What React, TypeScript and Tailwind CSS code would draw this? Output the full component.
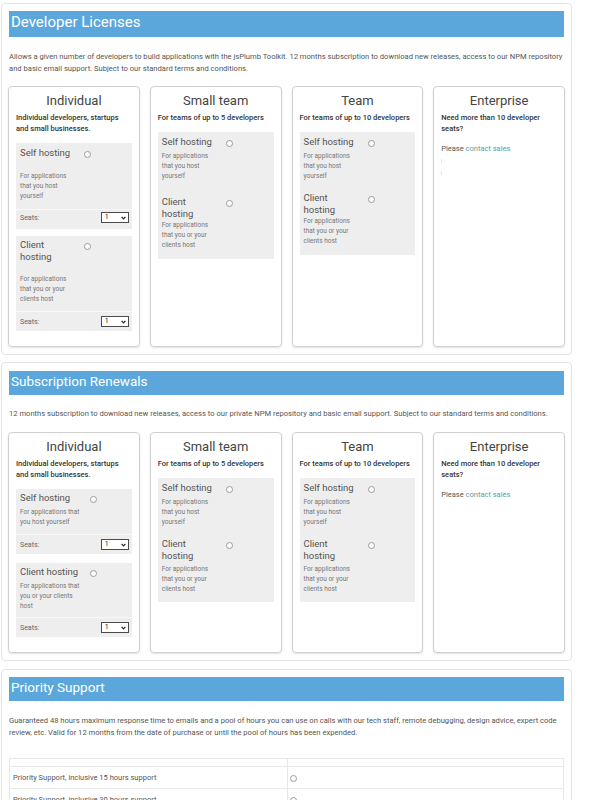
import React from "react";

type OptionProps = {
  title: string;
  desc: string;
  col: string;
  radioMl: string;
  descMt: string;
};

function Radio({ className }: { className: string }) {
  return (
    <span
      className={
        "block h-[7px] w-[7px] shrink-0 rounded-full border border-[#9a9a9a] bg-white " +
        className
      }
    />
  );
}

function Seats({ pad }: { pad: string }) {
  return (
    <div
      className={
        "flex items-center justify-between border-t border-[#f9f9f9] pl-[4px] pr-[3px] " + pad
      }
    >
      <span className="text-[7px] leading-[10px] text-[#666]">Seats:</span>
      <div className="flex h-[11px] w-[28px] items-center justify-between border border-[#4a4a4a] bg-white pl-[3px] pr-[2px]">
        <span className="text-[7px] leading-none text-[#222]">1</span>
        <svg width="5" height="4" viewBox="0 0 5 4">
          <path d="M0.6 0.8 L2.5 2.9 L4.4 0.8" fill="none" stroke="#222" strokeWidth="1.2" />
        </svg>
      </div>
    </div>
  );
}

function Option({ title, desc, col, radioMl, descMt }: OptionProps) {
  return (
    <div className="flex items-start">
      <div className={col}>
        <div className="text-[9.5px] leading-[12px] text-[#555]">{title}</div>
        <div className={descMt + " text-[6.5px] leading-[10px] text-[#777]"}>{desc}</div>
      </div>
      <Radio className={radioMl + " mt-[4px]"} />
    </div>
  );
}

function Card({
  title,
  subtitle,
  children,
}: {
  title: string;
  subtitle: string;
  children: React.ReactNode;
}) {
  return (
    <div className="rounded-[4px] border border-[#d0d0d0] px-[7px] pt-[6px] pb-[15px] shadow-[0_1px_2px_rgba(0,0,0,0.12)]">
      <div className="text-center text-[13px] leading-[16px] text-[#444]">{title}</div>
      <div className="mt-[3px] text-[7.5px] font-medium leading-[11px] text-[#333]">{subtitle}</div>
      {children}
    </div>
  );
}

function Heading({ text, cls }: { text: string; cls: string }) {
  return <div className={"mx-[1px] bg-[#5ba7dc] pl-[2px] leading-[20px] text-white " + cls}>{text}</div>;
}

function Section({ children, className }: { children: React.ReactNode; className: string }) {
  return (
    <div
      className={
        "ml-[1px] w-[571px] rounded-[4px] border border-[#e4e4e4] px-[6px] pb-[7px] " + className
      }
    >
      {children}
    </div>
  );
}

function TeamCard({
  title,
  subtitle,
  gap,
  hostMt,
  pb,
}: {
  title: string;
  subtitle: string;
  gap: string;
  hostMt: string;
  pb: string;
}) {
  return (
    <Card title={title} subtitle={subtitle}>
      <div className={"mt-[9px] bg-[#eeeeee] px-[4px] pt-[4px] " + pb}>
        <Option
          title="Self hosting"
          desc="For applications that you host yourself"
          col="w-[56px]"
          radioMl="ml-[8px]"
          descMt="mt-[3px]"
        />
        <div className={gap}>
          <Option
            title="Client hosting"
            desc="For applications that you or your clients host"
            col="w-[56px]"
            radioMl="ml-[8px]"
            descMt={hostMt}
          />
        </div>
      </div>
    </Card>
  );
}

function EnterpriseCard({ marks }: { marks: boolean }) {
  return (
    <Card title="Enterprise" subtitle="Need more than 10 developer seats?">
      <div className="mt-[9px] text-[7.5px] leading-[11px] text-[#555]">
        Please <span className="text-[#5a9e9d]">contact sales</span>
      </div>
      {marks && (
        <div className="flex flex-col">
          <span className="mt-[5px] block h-[4px] w-px bg-[#e8e8e8]" />
          <span className="mt-[8px] block h-[4px] w-px bg-[#e8e8e8]" />
        </div>
      )}
    </Card>
  );
}

const supportRows = [
  "Priority Support, inclusive 15 hours support",
  "Priority Support, inclusive 30 hours support",
  "Priority Support, inclusive 60 hours support",
];

export default function App() {
  return (
    <div className="h-[800px] overflow-hidden bg-white pt-[3px] font-[Roboto,Arial,sans-serif]">
      {/* Developer licenses */}
      <Section className="pt-[7px]">
        <Heading text="Developer Licenses" cls="h-[26px] pt-[1px] text-[15px]" />
        <p className="mx-[1px] mt-[14px] text-[7.6px] leading-[12px] text-[#555]">
          Allows a given number of developers to build applications with the jsPlumb Toolkit. 12
          months subscription to download new releases, access to our NPM repository and basic
          email support. Subject to our standard terms and conditions.
        </p>
        <div className="mt-[11px] grid grid-cols-4 gap-[10px]">
          <Card title="Individual" subtitle="Individual developers, startups and small businesses.">
            <div className="mt-[9px] bg-[#eeeeee]">
              <div className="px-[4px] pt-[4px] pb-[8px]">
                <Option
                  title="Self hosting"
                  desc="For applications that you host yourself"
                  col="w-[56px]"
                  radioMl="ml-[8px]"
                  descMt="mt-[12px]"
                />
              </div>
              <Seats pad="pt-[2px] pb-[6px]" />
            </div>
            <div className="mt-[7px] bg-[#eeeeee]">
              <div className="px-[4px] pt-[3px] pb-[7px]">
                <Option
                  title="Client hosting"
                  desc="For applications that you or your clients host"
                  col="w-[56px]"
                  radioMl="ml-[8px]"
                  descMt="mt-[11px]"
                />
              </div>
              <Seats pad="pt-[4px] pb-[4px]" />
            </div>
          </Card>
          <TeamCard
            title="Small team"
            subtitle="For teams of up to 5 developers"
            gap="mt-[15px]"
            hostMt="mt-0"
            pb="pb-[9px]"
          />
          <TeamCard
            title="Team"
            subtitle="For teams of up to 10 developers"
            gap="mt-[11px]"
            hostMt="mt-0"
            pb="pb-[9px]"
          />
          <EnterpriseCard marks />
        </div>
      </Section>

      {/* Subscription renewals */}
      <Section className="mt-[7px] pt-[8px]">
        <Heading text="Subscription Renewals" cls="h-[24px] text-[13.5px]" />
        <p className="mx-[1px] mt-[13px] text-[7.6px] leading-[12px] text-[#555]">
          12 months subscription to download new releases, access to our private NPM repository and
          basic email support. Subject to our standard terms and conditions.
        </p>
        <div className="mt-[12px] grid grid-cols-4 gap-[10px]">
          <Card title="Individual" subtitle="Individual developers, startups and small businesses.">
            <div className="mt-[9px] bg-[#eeeeee]">
              <div className="px-[4px] pt-[3px] pb-[7px]">
                <Option
                  title="Self hosting"
                  desc="For applications that you host yourself"
                  col="w-[64px]"
                  radioMl="ml-[6px]"
                  descMt="mt-[3px]"
                />
              </div>
              <Seats pad="pt-[4px] pb-[4px]" />
            </div>
            <div className="mt-[9px] bg-[#eeeeee]">
              <div className="px-[4px] pt-[3px] pb-[6px]">
                <Option
                  title="Client hosting"
                  desc="For applications that you or your clients host"
                  col="w-[64px]"
                  radioMl="ml-[6px]"
                  descMt="mt-[3px]"
                />
              </div>
              <Seats pad="pt-[4px] pb-[4px]" />
            </div>
          </Card>
          <TeamCard
            title="Small team"
            subtitle="For teams of up to 5 developers"
            gap="mt-[11px]"
            hostMt="mt-[2px]"
            pb="pb-[8px]"
          />
          <TeamCard
            title="Team"
            subtitle="For teams of up to 10 developers"
            gap="mt-[11px]"
            hostMt="mt-[2px]"
            pb="pb-[8px]"
          />
          <EnterpriseCard marks={false} />
        </div>
      </Section>

      {/* Priority support */}
      <Section className="mt-[8px] pt-[7px]">
        <Heading text="Priority Support" cls="h-[24px] text-[13.5px]" />
        <p className="mx-[1px] mt-[14px] text-[7.6px] leading-[11.5px] text-[#555]">
          Guaranteed 48 hours maximum response time to emails and a pool of hours you can use on
          calls with our tech staff, remote debugging, design advice, expert code review, etc. Valid
          for 12 months from the date of purchase or until the pool of hours has been expended.
        </p>
        <div className="mx-[1px] mt-[20px] border border-[#e8e8e8]">
          <div className="grid h-[8px] grid-cols-[278px_1fr] border-b border-[#e8e8e8]">
            <div className="border-r border-[#e8e8e8]" />
            <div />
          </div>
          {supportRows.map((row) => (
            <div
              key={row}
              className="grid h-[22px] grid-cols-[278px_1fr] border-b border-[#e8e8e8]"
            >
              <div className="flex items-center border-r border-[#e8e8e8] pl-[3px] text-[7.5px] text-[#555]">
                {row}
              </div>
              <div className="flex items-center pl-[2px]">
                <Radio className="mt-[1px]" />
              </div>
            </div>
          ))}
        </div>
      </Section>
    </div>
  );
}
